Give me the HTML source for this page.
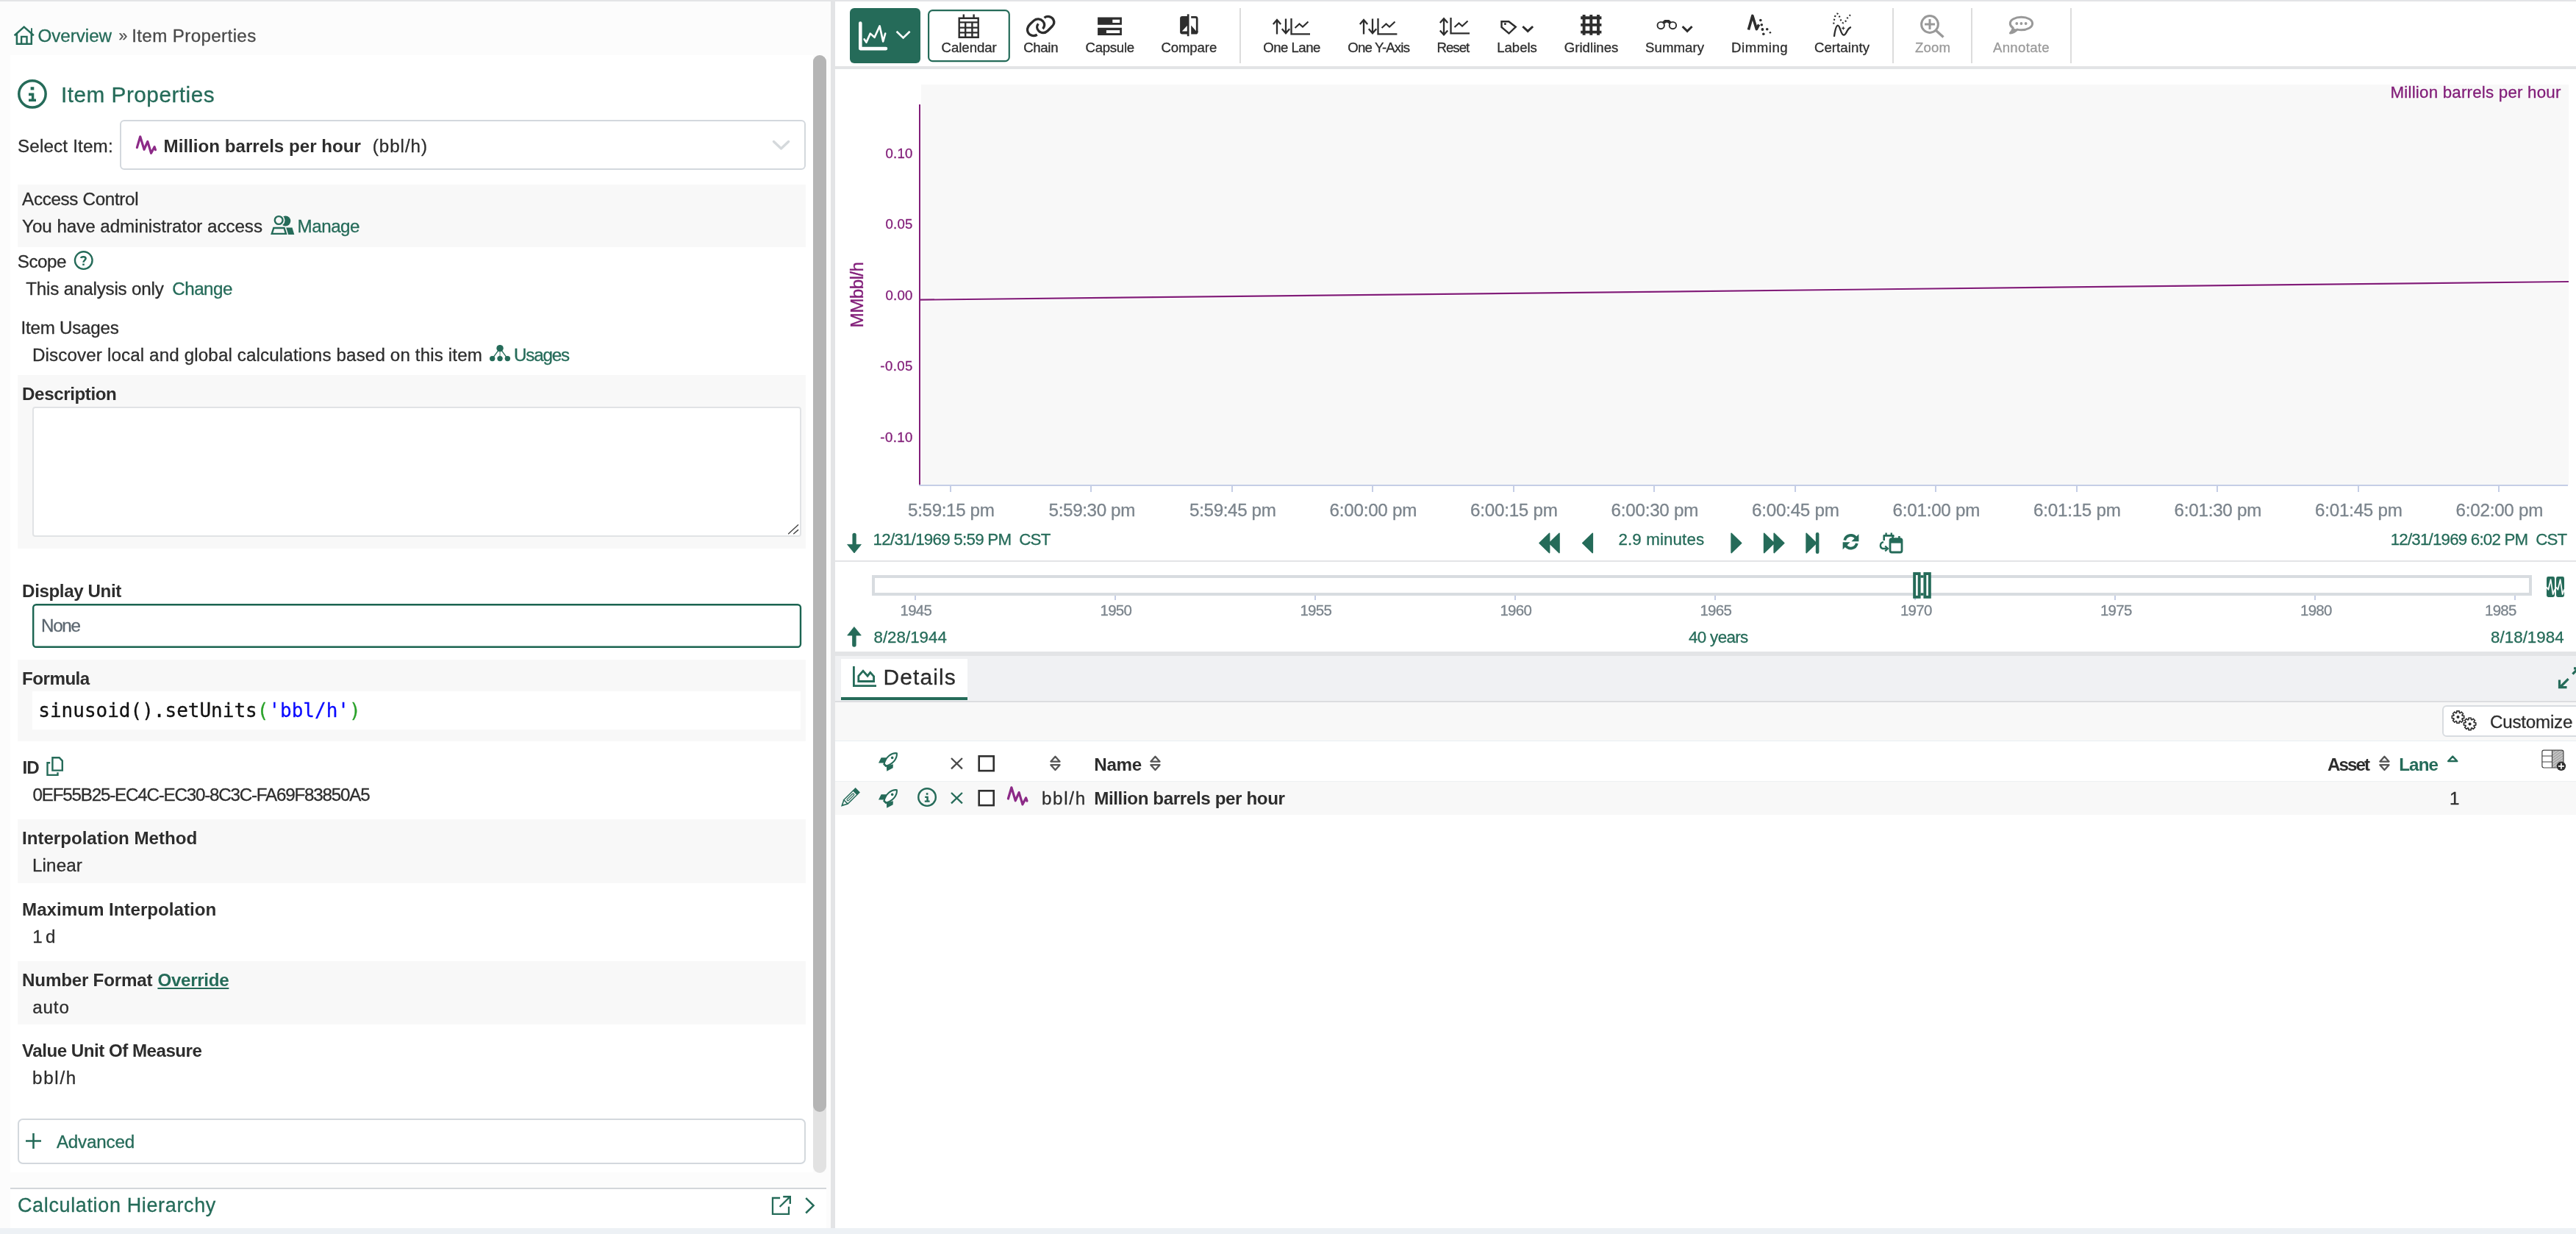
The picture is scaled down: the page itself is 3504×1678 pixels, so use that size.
<!DOCTYPE html>
<html lang="en"><head><meta charset="utf-8"><title>Item Properties</title>
<style>
html,body{margin:0;padding:0;background:#fff}
body{width:3504px;height:1678px;overflow:hidden}
#app{width:3504px;height:1678px;position:relative;overflow:hidden;background:#fff;
font-family:"Liberation Sans",sans-serif;will-change:transform}
#app>div,#app>svg,#app>span{position:absolute;box-sizing:border-box}
.t{white-space:nowrap;line-height:1.117;display:block;-webkit-text-stroke:0.3px currentColor}
.m{font-family:"DejaVu Sans Mono","Liberation Mono",monospace;line-height:1.164}
svg{overflow:visible}
</style></head>
<body>
<div id="app">
<div style="left:0px;top:0px;width:3504px;height:2px;background:#e3e4e6"></div>
<div style="left:0px;top:2px;width:1130px;height:1668px;background:#fcfcfc"></div>
<div style="left:1130px;top:2px;width:6px;height:1668px;background:#e3e4e6"></div>
<div style="left:0px;top:1669.5px;width:3504px;height:8.5px;background:#edf1f5"></div>
<div style="left:14px;top:75px;width:1092px;height:1519px;background:#fff"></div>
<div style="left:14px;top:1617px;width:1110px;height:52.5px;background:#fff"></div>
<div style="left:14px;top:1615px;width:1110px;height:2px;background:#d3d7da"></div>
<div style="left:1106px;top:75px;width:18px;height:1520px;background:#e2e2e2;border-radius:9px"></div>
<div style="left:1106px;top:75px;width:18px;height:1437px;background:#b5b5b5;border-radius:9px"></div>
<span id="t0" class="t" style="left:51.40px;top:35.4px;font-size:24.18px;color:#256b59;font-weight:400;letter-spacing:-0.011px;">Overview</span>
<span id="t1" class="t" style="left:161.60px;top:37.9px;font-size:21.39px;color:#555;font-weight:400;letter-spacing:0.000px;">»</span>
<span id="t2" class="t" style="left:179.20px;top:35.4px;font-size:24.18px;color:#4a4a4a;font-weight:400;letter-spacing:0.371px;">Item Properties</span>
<span id="t3" class="t" style="left:83.00px;top:111.9px;font-size:29.76px;color:#256b59;font-weight:400;letter-spacing:0.490px;">Item Properties</span>
<span id="t4" class="t" style="left:24.00px;top:184.5px;font-size:24.18px;color:#2d2d2d;font-weight:400;letter-spacing:0.181px;">Select Item:</span>
<div style="left:163.3px;top:163px;width:932.7px;height:68px;border:2px solid #d3d8dd;border-radius:6px;background:#fff"></div>
<span id="t5" class="t" style="left:222.60px;top:184.5px;font-size:24.18px;color:#2d2d2d;font-weight:700;letter-spacing:-0.013px;-webkit-text-stroke:0;">Million barrels per hour</span>
<span id="t6" class="t" style="left:506.80px;top:184.5px;font-size:24.18px;color:#2d2d2d;font-weight:400;letter-spacing:0.956px;">(bbl/h)</span>
<div style="left:24px;top:251px;width:1072px;height:84.5px;background:#f8f8f8"></div>
<span id="t7" class="t" style="left:30.10px;top:257.0px;font-size:24.18px;color:#2d2d2d;font-weight:400;letter-spacing:-0.314px;">Access Control</span>
<span id="t8" class="t" style="left:30.10px;top:294.2px;font-size:24.18px;color:#2d2d2d;font-weight:400;letter-spacing:-0.050px;">You have administrator access</span>
<span id="t9" class="t" style="left:404.50px;top:294.2px;font-size:24.18px;color:#256b59;font-weight:400;letter-spacing:-0.462px;">Manage</span>
<span id="t10" class="t" style="left:23.80px;top:342.1px;font-size:24.18px;color:#2d2d2d;font-weight:400;letter-spacing:-0.474px;">Scope</span>
<span id="t11" class="t" style="left:35.30px;top:379.1px;font-size:24.18px;color:#2d2d2d;font-weight:400;letter-spacing:-0.193px;">This analysis only</span>
<span id="t12" class="t" style="left:234.30px;top:379.1px;font-size:24.18px;color:#256b59;font-weight:400;letter-spacing:-0.506px;">Change</span>
<span id="t13" class="t" style="left:28.60px;top:432.1px;font-size:24.18px;color:#2d2d2d;font-weight:400;letter-spacing:-0.250px;">Item Usages</span>
<span id="t14" class="t" style="left:44.00px;top:468.5px;font-size:24.18px;color:#2d2d2d;font-weight:400;letter-spacing:0.129px;">Discover local and global calculations based on this item</span>
<span id="t15" class="t" style="left:699.10px;top:468.7px;font-size:24.18px;color:#256b59;font-weight:400;letter-spacing:-1.194px;">Usages</span>
<div style="left:24px;top:510px;width:1072px;height:235.5px;background:#f8f8f8"></div>
<span id="t16" class="t" style="left:30.10px;top:521.9px;font-size:24.18px;color:#2d2d2d;font-weight:700;letter-spacing:-0.430px;-webkit-text-stroke:0;">Description</span>
<div style="left:44px;top:553px;width:1046px;height:177px;border:2px solid #e1e3e5;border-radius:4px;background:#fff"></div>
<span id="t17" class="t" style="left:30.10px;top:789.7px;font-size:24.18px;color:#2d2d2d;font-weight:700;letter-spacing:-0.403px;-webkit-text-stroke:0;">Display Unit</span>
<svg style="left:44px;top:820.9px" width="1046.2" height="60" viewBox="0 0 1046.2 60"><rect x="1.2" y="1.2" width="1043.8" height="57.6" rx="4" fill="#fff" stroke="#1b6451" stroke-width="2.4"/></svg>
<span id="t18" class="t" style="left:56.10px;top:837.1px;font-size:24.18px;color:#5c6770;font-weight:400;letter-spacing:-1.348px;">None</span>
<div style="left:24px;top:897px;width:1072px;height:110.8px;background:#f8f8f8"></div>
<span id="t19" class="t" style="left:30.10px;top:908.8px;font-size:24.18px;color:#2d2d2d;font-weight:700;letter-spacing:-0.535px;-webkit-text-stroke:0;">Formula</span>
<div style="left:44px;top:940px;width:1045px;height:52px;background:#fff"></div>
<span id="t20" class="t m" style="left:52.30px;top:951.2px;font-size:26.0px;color:#111;font-weight:400;letter-spacing:0.000px;">sinusoid().setUnits<span style="color:#2aa22a">(</span><span style="color:#0a0aff">'bbl/h'</span><span style="color:#2aa22a">)</span></span>
<span id="t21" class="t" style="left:30.60px;top:1029.8px;font-size:24.18px;color:#2d2d2d;font-weight:700;letter-spacing:-1.016px;-webkit-text-stroke:0;">ID</span>
<span id="t22" class="t" style="left:44.50px;top:1067.3px;font-size:24.18px;color:#2d2d2d;font-weight:400;letter-spacing:-1.200px;">0EF55B25-EC4C-EC30-8C3C-FA69F83850A5</span>
<div style="left:24px;top:1114px;width:1072px;height:86.5px;background:#f8f8f8"></div>
<span id="t23" class="t" style="left:30.10px;top:1125.6px;font-size:24.18px;color:#2d2d2d;font-weight:700;letter-spacing:-0.049px;-webkit-text-stroke:0;">Interpolation Method</span>
<span id="t24" class="t" style="left:44.00px;top:1162.6px;font-size:24.18px;color:#2d2d2d;font-weight:400;letter-spacing:0.131px;">Linear</span>
<span id="t25" class="t" style="left:30.10px;top:1222.9px;font-size:24.18px;color:#2d2d2d;font-weight:700;letter-spacing:-0.025px;-webkit-text-stroke:0;">Maximum Interpolation</span>
<span id="t26" class="t" style="left:44.20px;top:1259.7px;font-size:24.18px;color:#2d2d2d;font-weight:400;letter-spacing:0.000px;word-spacing:-2.4px">1 d</span>
<div style="left:24px;top:1306.8px;width:1072px;height:86.2px;background:#f8f8f8"></div>
<span id="t27" class="t" style="left:30.10px;top:1318.9px;font-size:24.18px;color:#2d2d2d;font-weight:700;letter-spacing:-0.218px;-webkit-text-stroke:0;">Number Format</span>
<span id="t28" class="t" style="left:214.40px;top:1318.9px;font-size:24.18px;color:#256b59;font-weight:700;letter-spacing:-0.312px;-webkit-text-stroke:0;text-decoration:underline;text-decoration-thickness:1.7px;text-underline-offset:2.2px">Override</span>
<span id="t29" class="t" style="left:44.20px;top:1356.3px;font-size:24.18px;color:#2d2d2d;font-weight:400;letter-spacing:0.866px;">auto</span>
<span id="t30" class="t" style="left:30.00px;top:1415.0px;font-size:24.18px;color:#2d2d2d;font-weight:700;letter-spacing:-0.514px;-webkit-text-stroke:0;">Value Unit Of Measure</span>
<span id="t31" class="t" style="left:44.00px;top:1451.7px;font-size:24.18px;color:#2d2d2d;font-weight:400;letter-spacing:1.707px;">bbl/h</span>
<div style="left:24px;top:1521px;width:1072px;height:61.6px;border:2px solid #d3d8dd;border-radius:7px;background:#fff"></div>
<span id="t32" class="t" style="left:76.90px;top:1539.1px;font-size:24.18px;color:#256b59;font-weight:400;letter-spacing:-0.181px;">Advanced</span>
<span id="t33" class="t" style="left:24.00px;top:1624.4px;font-size:26.97px;color:#256b59;font-weight:400;letter-spacing:0.649px;">Calculation Hierarchy</span>
<div style="left:1136px;top:90px;width:2368px;height:4px;background:#e3e4e6"></div>
<div style="left:1156px;top:10.8px;width:96.2px;height:75.1px;background:#256b59;border-radius:6px"></div>
<svg style="left:1262px;top:12.9px" width="111.9" height="71.3" viewBox="0 0 111.9 71.3"><rect x="1.1" y="1.1" width="109.7" height="69.1" rx="5.5" fill="#fff" stroke="#256b59" stroke-width="2.2"/></svg>
<span id="t34" class="t" style="left:1280.50px;top:55.1px;font-size:18.6px;color:#2d2d2d;font-weight:400;letter-spacing:-0.023px;">Calendar</span>
<span id="t35" class="t" style="left:1392.20px;top:55.1px;font-size:18.6px;color:#2d2d2d;font-weight:400;letter-spacing:-0.310px;">Chain</span>
<span id="t36" class="t" style="left:1476.50px;top:55.1px;font-size:18.6px;color:#2d2d2d;font-weight:400;letter-spacing:-0.263px;">Capsule</span>
<span id="t37" class="t" style="left:1579.40px;top:55.1px;font-size:18.6px;color:#2d2d2d;font-weight:400;letter-spacing:-0.105px;">Compare</span>
<span id="t38" class="t" style="left:1718.30px;top:55.1px;font-size:18.6px;color:#2d2d2d;font-weight:400;letter-spacing:-0.519px;">One Lane</span>
<span id="t39" class="t" style="left:1833.30px;top:55.1px;font-size:18.6px;color:#2d2d2d;font-weight:400;letter-spacing:-0.814px;">One Y-Axis</span>
<span id="t40" class="t" style="left:1954.40px;top:55.1px;font-size:18.6px;color:#2d2d2d;font-weight:400;letter-spacing:-0.927px;">Reset</span>
<span id="t41" class="t" style="left:2036.30px;top:55.1px;font-size:18.6px;color:#2d2d2d;font-weight:400;letter-spacing:-0.059px;">Labels</span>
<span id="t42" class="t" style="left:2127.70px;top:55.1px;font-size:18.6px;color:#2d2d2d;font-weight:400;letter-spacing:0.041px;">Gridlines</span>
<span id="t43" class="t" style="left:2238.00px;top:55.1px;font-size:18.6px;color:#2d2d2d;font-weight:400;letter-spacing:0.074px;">Summary</span>
<span id="t44" class="t" style="left:2355.00px;top:55.1px;font-size:18.6px;color:#2d2d2d;font-weight:400;letter-spacing:0.549px;">Dimming</span>
<span id="t45" class="t" style="left:2467.90px;top:55.1px;font-size:18.6px;color:#2d2d2d;font-weight:400;letter-spacing:0.087px;">Certainty</span>
<span id="t46" class="t" style="left:2605.10px;top:55.1px;font-size:18.6px;color:#9a9a9a;font-weight:400;letter-spacing:0.120px;">Zoom</span>
<span id="t47" class="t" style="left:2711.00px;top:55.1px;font-size:18.6px;color:#9a9a9a;font-weight:400;letter-spacing:0.315px;">Annotate</span>
<div style="left:1686px;top:11px;width:2px;height:75px;background:#dcdcdc"></div>
<div style="left:2574px;top:11px;width:2px;height:75px;background:#dcdcdc"></div>
<div style="left:2681px;top:11px;width:2px;height:75px;background:#dcdcdc"></div>
<div style="left:2816px;top:11px;width:2px;height:75px;background:#dcdcdc"></div>
<div style="left:1252.6px;top:115px;width:2241px;height:545px;background:#f8f8f8"></div>
<div style="left:1250px;top:142px;width:2px;height:518px;background:#821e79"></div>
<div style="left:1250px;top:659px;width:2243px;height:2px;background:#c5cee6"></div>
<div style="left:1292px;top:660px;width:2px;height:9px;background:#c5cee6"></div>
<span id="t48" class="t" style="left:1235.10px;top:680.0px;font-size:24.18px;color:#7b848c;font-weight:400;letter-spacing:-0.356px;">5:59:15 pm</span>
<div style="left:1483px;top:660px;width:2px;height:9px;background:#c5cee6"></div>
<span id="t49" class="t" style="left:1426.60px;top:680.0px;font-size:24.18px;color:#7b848c;font-weight:400;letter-spacing:-0.356px;">5:59:30 pm</span>
<div style="left:1675px;top:660px;width:2px;height:9px;background:#c5cee6"></div>
<span id="t50" class="t" style="left:1618.10px;top:680.0px;font-size:24.18px;color:#7b848c;font-weight:400;letter-spacing:-0.356px;">5:59:45 pm</span>
<div style="left:1866px;top:660px;width:2px;height:9px;background:#c5cee6"></div>
<span id="t51" class="t" style="left:1808.60px;top:680.0px;font-size:24.18px;color:#7b848c;font-weight:400;letter-spacing:-0.245px;">6:00:00 pm</span>
<div style="left:2058px;top:660px;width:2px;height:9px;background:#c5cee6"></div>
<span id="t52" class="t" style="left:2000.10px;top:680.0px;font-size:24.18px;color:#7b848c;font-weight:400;letter-spacing:-0.245px;">6:00:15 pm</span>
<div style="left:2249px;top:660px;width:2px;height:9px;background:#c5cee6"></div>
<span id="t53" class="t" style="left:2191.60px;top:680.0px;font-size:24.18px;color:#7b848c;font-weight:400;letter-spacing:-0.245px;">6:00:30 pm</span>
<div style="left:2441px;top:660px;width:2px;height:9px;background:#c5cee6"></div>
<span id="t54" class="t" style="left:2383.10px;top:680.0px;font-size:24.18px;color:#7b848c;font-weight:400;letter-spacing:-0.245px;">6:00:45 pm</span>
<div style="left:2632px;top:660px;width:2px;height:9px;background:#c5cee6"></div>
<span id="t55" class="t" style="left:2574.60px;top:680.0px;font-size:24.18px;color:#7b848c;font-weight:400;letter-spacing:-0.245px;">6:01:00 pm</span>
<div style="left:2824px;top:660px;width:2px;height:9px;background:#c5cee6"></div>
<span id="t56" class="t" style="left:2766.10px;top:680.0px;font-size:24.18px;color:#7b848c;font-weight:400;letter-spacing:-0.245px;">6:01:15 pm</span>
<div style="left:3015px;top:660px;width:2px;height:9px;background:#c5cee6"></div>
<span id="t57" class="t" style="left:2957.60px;top:680.0px;font-size:24.18px;color:#7b848c;font-weight:400;letter-spacing:-0.245px;">6:01:30 pm</span>
<div style="left:3207px;top:660px;width:2px;height:9px;background:#c5cee6"></div>
<span id="t58" class="t" style="left:3149.10px;top:680.0px;font-size:24.18px;color:#7b848c;font-weight:400;letter-spacing:-0.245px;">6:01:45 pm</span>
<div style="left:3398px;top:660px;width:2px;height:9px;background:#c5cee6"></div>
<span id="t59" class="t" style="left:3340.60px;top:680.0px;font-size:24.18px;color:#7b848c;font-weight:400;letter-spacing:-0.245px;">6:02:00 pm</span>
<span id="t60" class="t" style="left:1204.40px;top:198.6px;font-size:18.6px;color:#821e79;font-weight:400;letter-spacing:0.251px;">0.10</span>
<span id="t61" class="t" style="left:1204.40px;top:295.1px;font-size:18.6px;color:#821e79;font-weight:400;letter-spacing:0.251px;">0.05</span>
<span id="t62" class="t" style="left:1204.40px;top:391.6px;font-size:18.6px;color:#821e79;font-weight:400;letter-spacing:0.251px;">0.00</span>
<span id="t63" class="t" style="left:1197.30px;top:488.1px;font-size:18.6px;color:#821e79;font-weight:400;letter-spacing:0.415px;">-0.05</span>
<span id="t64" class="t" style="left:1197.30px;top:584.6px;font-size:18.6px;color:#821e79;font-weight:400;letter-spacing:0.415px;">-0.10</span>
<svg style="left:1250px;top:370px;" width="2244" height="50" viewBox="0 0 2244 50"><path d="M2.4,37.7 L2244,13" stroke="#fff" stroke-width="4.6" fill="none"/><path d="M1,37.7 L2244,13" stroke="#821e79" stroke-width="2.2" fill="none"/></svg>
<span id="t65" class="t" style="left:3251.50px;top:113.5px;font-size:22.32px;color:#821e79;font-weight:400;letter-spacing:0.217px;">Million barrels per hour</span>
<span class="t" style="left:1165.6px;top:400.6px;font-size:24.2px;color:#821e79;transform:translate(-50%,-50%) rotate(-90deg);letter-spacing:-0.55px">MMbbl/h</span>
<span id="t66" class="t" style="left:1187.60px;top:722.0px;font-size:22.32px;color:#256b59;font-weight:400;letter-spacing:-0.739px;">12/31/1969 5:59 PM&nbsp; CST</span>
<span id="t67" class="t" style="left:2201.40px;top:722.0px;font-size:22.32px;color:#256b59;font-weight:400;letter-spacing:0.141px;">2.9 minutes</span>
<span id="t68" class="t" style="left:3251.70px;top:722.0px;font-size:22.32px;color:#256b59;font-weight:400;letter-spacing:-0.794px;">12/31/1969 6:02 PM&nbsp; CST</span>
<div style="left:1136px;top:762px;width:2368px;height:2px;background:#e3e4e6"></div>
<div style="left:1186px;top:782px;width:2258px;height:28px;border:4px solid #d8dce0;background:#fff"></div>
<div style="left:1244px;top:810px;width:2px;height:6px;background:#c5cee6"></div>
<span id="t69" class="t" style="left:1224.50px;top:819.4px;font-size:20.46px;color:#7b848c;font-weight:400;letter-spacing:-0.700px;">1945</span>
<div style="left:1516px;top:810px;width:2px;height:6px;background:#c5cee6"></div>
<span id="t70" class="t" style="left:1496.50px;top:819.4px;font-size:20.46px;color:#7b848c;font-weight:400;letter-spacing:-0.700px;">1950</span>
<div style="left:1788px;top:810px;width:2px;height:6px;background:#c5cee6"></div>
<span id="t71" class="t" style="left:1768.40px;top:819.4px;font-size:20.46px;color:#7b848c;font-weight:400;letter-spacing:-0.700px;">1955</span>
<div style="left:2060px;top:810px;width:2px;height:6px;background:#c5cee6"></div>
<span id="t72" class="t" style="left:2040.40px;top:819.4px;font-size:20.46px;color:#7b848c;font-weight:400;letter-spacing:-0.700px;">1960</span>
<div style="left:2332px;top:810px;width:2px;height:6px;background:#c5cee6"></div>
<span id="t73" class="t" style="left:2312.40px;top:819.4px;font-size:20.46px;color:#7b848c;font-weight:400;letter-spacing:-0.700px;">1965</span>
<div style="left:2604px;top:810px;width:2px;height:6px;background:#c5cee6"></div>
<span id="t74" class="t" style="left:2584.90px;top:819.4px;font-size:20.46px;color:#7b848c;font-weight:400;letter-spacing:-0.700px;">1970</span>
<div style="left:2876px;top:810px;width:2px;height:6px;background:#c5cee6"></div>
<span id="t75" class="t" style="left:2856.90px;top:819.4px;font-size:20.46px;color:#7b848c;font-weight:400;letter-spacing:-0.700px;">1975</span>
<div style="left:3148px;top:810px;width:2px;height:6px;background:#c5cee6"></div>
<span id="t76" class="t" style="left:3129.00px;top:819.4px;font-size:20.46px;color:#7b848c;font-weight:400;letter-spacing:-0.700px;">1980</span>
<div style="left:3420px;top:810px;width:2px;height:6px;background:#c5cee6"></div>
<span id="t77" class="t" style="left:3380.00px;top:819.4px;font-size:20.46px;color:#7b848c;font-weight:400;letter-spacing:-0.700px;">1985</span>
<span id="t78" class="t" style="left:1188.50px;top:854.7px;font-size:22.32px;color:#256b59;font-weight:400;letter-spacing:0.006px;">8/28/1944</span>
<span id="t79" class="t" style="left:2297.00px;top:854.7px;font-size:22.32px;color:#256b59;font-weight:400;letter-spacing:-0.632px;">40 years</span>
<span id="t80" class="t" style="left:3388.10px;top:854.7px;font-size:22.32px;color:#256b59;font-weight:400;letter-spacing:0.031px;">8/18/1984</span>
<div style="left:1136px;top:886.4px;width:2368px;height:6px;background:#e3e4e6"></div>
<div style="left:1136px;top:892.4px;width:2368px;height:60.5px;background:#f0f1f3"></div>
<div style="left:1136px;top:952.7px;width:2368px;height:2px;background:#dcdde0"></div>
<div style="left:1144px;top:896.3px;width:172px;height:55.5px;background:#fff;border-bottom:4px solid #256b59"></div>
<span id="t81" class="t" style="left:1201.50px;top:904.2px;font-size:30px;color:#2a2a2a;font-weight:400;letter-spacing:1.100px;">Details</span>
<div style="left:1136px;top:954.5px;width:2368px;height:53px;background:#f8f8f8;border-bottom:1.4px solid #e9eef3"></div>
<div style="left:3322.4px;top:958.5px;width:200px;height:43.3px;border:2px solid #d8dce0;border-radius:6px;background:#fff"></div>
<span id="t82" class="t" style="left:3387.00px;top:968.1px;font-size:24.18px;color:#2d2d2d;font-weight:400;letter-spacing:-0.229px;">Customize</span>
<div style="left:1136px;top:1061.5px;width:2368px;height:46px;background:#f8f8f8;border-top:1.5px solid #eef0f2"></div>
<span id="t83" class="t" style="left:1488.20px;top:1025.9px;font-size:24.18px;color:#2d2d2d;font-weight:700;letter-spacing:-0.264px;-webkit-text-stroke:0;">Name</span>
<span id="t84" class="t" style="left:3166.10px;top:1025.9px;font-size:24.18px;color:#2d2d2d;font-weight:700;letter-spacing:-1.971px;-webkit-text-stroke:0;">Asset</span>
<span id="t85" class="t" style="left:3263.20px;top:1025.9px;font-size:24.18px;color:#256b59;font-weight:700;letter-spacing:-0.858px;-webkit-text-stroke:0;">Lane</span>
<span id="t86" class="t" style="left:1416.90px;top:1072.0px;font-size:24.18px;color:#2d2d2d;font-weight:400;letter-spacing:1.732px;">bbl/h</span>
<span id="t87" class="t" style="left:1488.20px;top:1072.0px;font-size:24.18px;color:#2d2d2d;font-weight:700;letter-spacing:-0.383px;-webkit-text-stroke:0;">Million barrels per hour</span>
<span id="t88" class="t" style="left:3332.00px;top:1072.0px;font-size:24.18px;color:#2d2d2d;font-weight:400;letter-spacing:0.000px;">1</span>
<svg style="left:16px;top:32px" width="34" height="32" viewBox="16 32 34 32"><path d="M19.6,48.2 L32.7,36.6 L45.9,48.2" fill="none" stroke="#256b59" stroke-width="2.5"/><path d="M22.9,45.8 V59.8 H42.8 V45.8" fill="none" stroke="#256b59" stroke-width="2.5"/><path d="M29.1,59.8 V49.9 H36.5 V59.8" fill="none" stroke="#256b59" stroke-width="2.4"/><path d="M43,38.2 V46" fill="none" stroke="#256b59" stroke-width="1.9"/></svg>
<svg style="left:20px;top:104px" width="48" height="48" viewBox="20 104 48 48"><circle cx="43.95" cy="127.85" r="18.2" fill="none" stroke="#256b59" stroke-width="3.5"/><rect x="41.6" y="118.2" width="4.7" height="4.2" fill="#256b59"/><path d="M39,126.6 H46.3 V134.5 H49 V137.9 H39 V134.5 H42.9 V130.3 H39 Z" fill="#256b59"/></svg>
<svg style="left:184.7px;top:183.5px" width="27.7" height="26.1" viewBox="0 0 28 26" preserveAspectRatio="none"><path d="M1.4,16.6 L5.8,1.8 L11.2,19.2 L16,8.4 L20.8,24.2 L25.4,15.6 L26.8,19.6" fill="none" stroke="#8c2a87" stroke-width="3.2" stroke-linejoin="round" stroke-linecap="round"/></svg>
<svg style="left:1050.7px;top:191.3px" width="23.1" height="13.5" viewBox="0 0 23 13.5" preserveAspectRatio="none"><path d="M1.5,1.5 L11.5,11 L21.5,1.5" fill="none" stroke="#d5d9dc" stroke-width="3.4" stroke-linecap="round" stroke-linejoin="round"/></svg>
<svg style="left:364px;top:290px" width="40" height="32" viewBox="364 290 40 32"><defs><clipPath id="mh"><path d="M364,290 H404 V322 H364 Z M379.2,291.2 A8.3,8.3 0 1 0 379.2,307.8 A8.3,8.3 0 1 0 379.2,291.2 Z" clip-rule="evenodd"/></clipPath></defs><circle cx="388.4" cy="300.5" r="6.9" fill="#256b59" clip-path="url(#mh)"/><circle cx="379.2" cy="299.5" r="5.4" fill="none" stroke="#256b59" stroke-width="2.4"/><path d="M372.3,310 H386.5 L389,317.9 H369.8 Z" fill="none" stroke="#256b59" stroke-width="2.4"/><path d="M389.2,309.6 H397.5 L400.3,319.1 H392.2 Z" fill="#256b59"/></svg>
<svg style="left:98px;top:338px" width="32" height="32" viewBox="98 338 32 32"><circle cx="113.75" cy="354.1" r="11.8" fill="none" stroke="#256b59" stroke-width="2.4"/><path d="M110.2,351 C110.6,348.6 116.6,348.6 116.6,351.6 C116.6,353.8 113.5,354 113.5,356.8" fill="none" stroke="#256b59" stroke-width="2.5"/><rect x="112.2" y="358.5" width="2.6" height="2.4" fill="#256b59"/></svg>
<svg style="left:662px;top:466px" width="36" height="28" viewBox="662 466 36 28"><path d="M680.06,473.6 L669.7,487.6 M680.06,473.6 L690.4,487.6" fill="none" stroke="#256b59" stroke-width="1.4"/><path d="M680.06,473.6 V487.6" fill="none" stroke="#256b59" stroke-width="1.2" opacity="0.7"/><circle cx="680.06" cy="473.6" r="4.7" fill="#256b59"/><circle cx="669.7" cy="487.6" r="3.7" fill="#256b59"/><circle cx="680.06" cy="487.6" r="3.7" fill="#256b59"/><circle cx="690.4" cy="487.6" r="3.7" fill="#256b59"/></svg>
<svg style="left:1068px;top:710px" width="22" height="20" viewBox="1068 710 22 20"><path d="M1072.6,725.8 L1085.6,713.8 M1079.7,725.8 L1085.6,720.6" fill="none" stroke="#444" stroke-width="1.4" stroke-linecap="round"/></svg>
<svg style="left:60px;top:1026px" width="30" height="32" viewBox="60 1026 30 32"><path d="M71.4,1030.2 H80.6 L84.8,1034.6 V1047.6 H71.4 Z" fill="none" stroke="#256b59" stroke-width="2.4"/><path d="M68.2,1037.2 H64.5 V1053.9 H78.5 V1050.2" fill="none" stroke="#256b59" stroke-width="2.4"/></svg>
<svg style="left:35px;top:1541px" width="21" height="21" viewBox="0 0 21 21" preserveAspectRatio="none"><path d="M10.5,0 V21 M0,10.5 H21" fill="none" stroke="#256b59" stroke-width="2.6"/></svg>
<svg style="left:1046px;top:1622px" width="66" height="34" viewBox="1046 1622 66 34"><path d="M1061.1,1629 H1051 V1650.9 H1073 V1640.8" fill="none" stroke="#256b59" stroke-width="2.3"/><path d="M1060.6,1641 L1074.4,1627.5 M1065.2,1627.2 H1074.8 V1637" fill="none" stroke="#256b59" stroke-width="2.4"/><path d="M1096.2,1629.2 L1106.6,1639.3 L1096.2,1649.5" fill="none" stroke="#256b59" stroke-width="2.5"/></svg>
<svg style="left:1160px;top:20px" width="90" height="60" viewBox="1160 20 90 60"><path d="M1170.3,31.5 V66.1 H1205" fill="none" stroke="#fff" stroke-width="4.6" stroke-linecap="round" stroke-linejoin="round"/><path d="M1175.6,53.3 L1178.4,57.6 L1183.8,45.6 L1189.6,50.8 L1196.6,35.4 L1201.2,56.4 L1204.2,45.6" fill="none" stroke="#fff" stroke-width="2.6" stroke-linejoin="round" stroke-linecap="round"/><path d="M1219.6,42.8 L1228.6,51.4 L1237.6,42.8" fill="none" stroke="#fff" stroke-width="2.6"/></svg>
<svg style="left:1300px;top:17px" width="36" height="38" viewBox="1300 17 36 38"><path d="M1304.7,24.8 H1330.7 V50.7 H1304.7 Z M1304.7,30.4 H1330.7 M1304.7,37.6 H1330.7 M1304.7,44.4 H1330.7 M1313.2,30.4 V50.7 M1322.4,30.4 V50.7 M1310.8,19.6 V24.8 M1324.6,19.6 V24.8" fill="none" stroke="#2d2d2d" stroke-width="2.4"/></svg>
<svg style="left:1392px;top:17px" width="48" height="38" viewBox="1392 17 48 38"><path d="M1410.8,47.3 C1405,50.5 1398.5,47.5 1397.6,41.5 C1397,37.5 1399,35 1401.5,32.5 L1406.5,27.9 C1410,24.8 1415.5,25.3 1418.6,28.8 C1421.3,32 1421,36 1418.5,39.2" fill="none" stroke="#2d2d2d" stroke-width="3.3"/><path d="M1420.5,24.2 C1424.5,21 1430.5,22.3 1432.8,26.6 C1434.6,30 1433.5,33.5 1431,36 L1425,42 C1421.5,45.5 1416,45.5 1412.8,42 C1410,39 1410,35 1412.4,32.3" fill="none" stroke="#2d2d2d" stroke-width="3.3"/></svg>
<svg style="left:1490px;top:20px" width="40" height="32" viewBox="1490 20 40 32"><path d="M1493.1,23.6 H1525.9 V33.7 H1493.1 Z M1493.1,37.8 H1525.9 V48 H1493.1 Z" fill="#2d2d2d"/><rect x="1513.3" y="26.7" width="9.9" height="4.3" fill="#fff"/><rect x="1504.9" y="41.1" width="18.3" height="4" fill="#fff"/></svg>
<svg style="left:1600px;top:16px" width="34" height="36" viewBox="1600 16 34 36"><path d="M1615.2,22 H1608.1 Q1605.1,22 1605.1,25 V43.5 Q1605.1,46.5 1608.1,46.5 H1615.2 Z" fill="#2d2d2d"/><path d="M1607.8,42.6 L1615.2,34.5 V42.6 Z" fill="#fff"/><path d="M1616.15,19.3 V49.2" fill="none" stroke="#2d2d2d" stroke-width="2.7"/><path d="M1620.2,23.4 H1626.2 Q1628.2,23.4 1628.2,25.4 V44" fill="none" stroke="#2d2d2d" stroke-width="2.7"/><path d="M1620.2,34.5 L1627,42.2 L1629.5,42.2 V43.7 Q1629.5,46.5 1626.7,46.5 H1620.2 Z" fill="#2d2d2d"/></svg>
<svg style="left:1730.8px;top:25.2px" width="51.0" height="22.5" viewBox="0 0 51.0 22.5" preserveAspectRatio="none"><path d="M6,21.5 V2 M0.8,8 L6,2 L11.2,8" fill="none" stroke="#2d2d2d" stroke-width="2.3"/><path d="M18,0.5 V20 M12.8,14.2 L18,20.2 L23.2,14.2" fill="none" stroke="#2d2d2d" stroke-width="2.3"/><path d="M25.5,0 V21.3 H51.0" fill="none" stroke="#2d2d2d" stroke-width="2.3"/><path d="M30.5,13 L36.5,7.5 L41.0,11.5 L48.5,4.5" fill="none" stroke="#2d2d2d" stroke-width="2.1"/></svg>
<svg style="left:1848.6px;top:25.2px" width="51.4" height="22.5" viewBox="0 0 51.4 22.5" preserveAspectRatio="none"><path d="M6,21.5 V2 M0.8,8 L6,2 L11.2,8" fill="none" stroke="#2d2d2d" stroke-width="2.3"/><path d="M18,0.5 V20 M12.8,14.2 L18,20.2 L23.2,14.2" fill="none" stroke="#2d2d2d" stroke-width="2.3"/><path d="M25.5,0 V21.3 H51.40000000000009" fill="none" stroke="#2d2d2d" stroke-width="2.3"/><path d="M30.5,13 L36.5,7.5 L41.0,11.5 L48.5,4.5" fill="none" stroke="#2d2d2d" stroke-width="2.1"/></svg>
<svg style="left:1957.6px;top:23.6px" width="41.0" height="25.0" viewBox="0 0 41.0 25" preserveAspectRatio="none"><path d="M6,1.5 V23 M0.8,7 L6,1.2 L11.2,7 M0.8,17.5 L6,23.3 L11.2,17.5" fill="none" stroke="#2d2d2d" stroke-width="2.3"/><path d="M15.5,0 V21.3 H41.0" fill="none" stroke="#2d2d2d" stroke-width="2.3"/><path d="M20.5,13 L26.5,7.5 L31.0,11.5 L38.5,4.5" fill="none" stroke="#2d2d2d" stroke-width="2.1"/></svg>
<svg style="left:2036px;top:22px" width="56" height="30" viewBox="2036 22 56 30"><path d="M2042.5,29.2 H2052.3 L2061.8,36.7 L2052.5,45.5 L2042.5,37 Z" fill="none" stroke="#2d2d2d" stroke-width="2.4" stroke-linejoin="miter"/><circle cx="2047.4" cy="32.4" r="1.5" fill="#2d2d2d"/><path d="M2071.3,36 L2078.2,42.4 L2085.1,36" fill="none" stroke="#2d2d2d" stroke-width="3"/></svg>
<svg style="left:2146px;top:16px" width="36" height="36" viewBox="2146 16 36 36"><path d="M2150.2,24.3 H2178.4 M2150.2,33.9 H2178.4 M2150.2,43.6 H2178.4 M2154.6,19.9 V47.7 M2164.3,19.9 V47.7 M2174,19.9 V47.7" fill="none" stroke="#2d2d2d" stroke-width="3.9"/></svg>
<svg style="left:2250px;top:22px" width="58" height="26" viewBox="2250 22 58 26"><circle cx="2259.2" cy="34.6" r="4.7" fill="none" stroke="#2d2d2d" stroke-width="1.9"/><circle cx="2275.4" cy="34.6" r="4.7" fill="none" stroke="#2d2d2d" stroke-width="1.9"/><path d="M2260.5,30.2 L2264.3,27 H2270.3 L2274.1,30.2 L2271,32.4 L2267.3,30.6 L2263.6,32.4 Z" fill="#2d2d2d"/><path d="M2288.6,36 L2295.1,42.4 L2301.6,36" fill="none" stroke="#2d2d2d" stroke-width="3"/></svg>
<svg style="left:2372px;top:14px" width="42" height="38" viewBox="2372 14 42 38"><path d="M2378.4,40.6 L2383.8,21.4 L2389.4,39.6 L2392.6,33.4" fill="none" stroke="#2d2d2d" stroke-width="3.6" stroke-linejoin="round" stroke-linecap="butt"/><circle cx="2394.8" cy="27.5" r="1.8" fill="#2d2d2d"/><circle cx="2396.3" cy="33.8" r="1.8" fill="#2d2d2d"/><circle cx="2397.4" cy="40" r="1.9" fill="#2d2d2d"/><circle cx="2403.7" cy="39.7" r="1.8" fill="#2d2d2d"/><circle cx="2398.8" cy="46.3" r="1.8" fill="#2d2d2d"/><circle cx="2407.9" cy="44.2" r="1.3" fill="#2d2d2d"/></svg>
<svg style="left:2488px;top:14px" width="36" height="40" viewBox="2488 14 36 40"><path d="M2494.2,32.7 C2495,25 2496.6,18.7 2499.1,18.7 C2502.4,18.7 2503.6,31.3 2507.5,31.3 C2511,31.3 2512,22.6 2517.2,20.4" fill="none" stroke="#2d2d2d" stroke-width="2.2" stroke-dasharray="2 2.9"/><path d="M2494.9,49.8 C2496,42 2497.4,34.7 2499.9,34.7 C2503.2,34.7 2503.8,47.6 2507.9,47.6 C2512,47.6 2511.6,38.8 2517.9,36.9" fill="none" stroke="#2d2d2d" stroke-width="2.3"/><path d="M2507.3,36.2 V40.4 M2505.2,38.3 H2509.4" fill="none" stroke="#2d2d2d" stroke-width="1.2"/></svg>
<svg style="left:2612.3px;top:19.7px" width="32.5" height="31.6" viewBox="0 0 32.5 31.6" preserveAspectRatio="none"><circle cx="13" cy="13" r="11.4" fill="none" stroke="#999" stroke-width="3"/><path d="M21.5,21.5 L31.5,30.6" fill="none" stroke="#999" stroke-width="3.4"/><path d="M13,6 V20 M6,13 H20" fill="none" stroke="#999" stroke-width="3"/></svg>
<svg style="left:2732.7px;top:21.7px" width="32.9" height="24.5" viewBox="0 0 33 24.5" preserveAspectRatio="none"><path d="M16.5,1.3 C25,1.3 31.7,5 31.7,10 C31.7,15 25,18.7 16.5,18.7 C14.5,18.7 12.8,18.5 11,18.1 C8.5,20.6 5.5,22.6 1.5,23 C3.5,20.8 5,18.6 5.3,16 C2.8,14.4 1.3,12.3 1.3,10 C1.3,5 8,1.3 16.5,1.3 Z" fill="none" stroke="#999" stroke-width="3" stroke-linejoin="round"/><path d="M5.3,16.6 C5,19 3.5,21 1.5,23 C5.5,22.6 8.5,20.6 11,18.1 Z" fill="#999"/><circle cx="10.3" cy="10" r="1.9" fill="#999"/><circle cx="16.5" cy="10" r="1.9" fill="#999"/><circle cx="22.7" cy="10" r="1.9" fill="#999"/></svg>
<svg style="left:1148px;top:720px" width="28" height="36" viewBox="1148 720 28 36"><path d="M1162.1,727.3 V741" fill="none" stroke="#256b59" stroke-width="5.3" stroke-linecap="round"/><path d="M1152.6,740.4 H1171.4 L1162,752 Z" fill="#256b59" stroke="#256b59" stroke-width="0.8" stroke-linejoin="round"/></svg>
<svg style="left:1148px;top:848px" width="28" height="36" viewBox="1148 848 28 36"><path d="M1161.9,877 V863.5" fill="none" stroke="#256b59" stroke-width="5.5" stroke-linecap="round"/><path d="M1152.7,864 H1171.3 L1161.9,852.5 Z" fill="#256b59" stroke="#256b59" stroke-width="0.8" stroke-linejoin="round"/></svg>
<svg style="left:2090px;top:720px" width="40" height="36" viewBox="2090 720 40 36"><path d="M2107.6,725.4 V751.6 L2094,738.5 Z M2121,725.4 V751.6 L2107.4,738.5 Z" fill="#256b59" stroke="#256b59" stroke-width="1.6" stroke-linejoin="round"/></svg>
<svg style="left:2148px;top:720px" width="24" height="36" viewBox="2148 720 24 36"><path d="M2166.3,725.4 V751.6 L2152.7,738.5 Z" fill="#256b59" stroke="#256b59" stroke-width="1.6" stroke-linejoin="round"/></svg>
<svg style="left:2350px;top:720px" width="24" height="36" viewBox="2350 720 24 36"><path d="M2355.1,725.4 V751.6 L2368.7,738.5 Z" fill="#256b59" stroke="#256b59" stroke-width="1.6" stroke-linejoin="round"/></svg>
<svg style="left:2395px;top:720px" width="40" height="36" viewBox="2395 720 40 36"><path d="M2399.6,725.4 V751.6 L2413.2,738.5 Z M2413.2,725.4 V751.6 L2426.8,738.5 Z" fill="#256b59" stroke="#256b59" stroke-width="1.6" stroke-linejoin="round"/></svg>
<svg style="left:2452px;top:720px" width="28" height="36" viewBox="2452 720 28 36"><path d="M2457.1,725.4 V751.6 L2470.7,738.5 Z" fill="#256b59" stroke="#256b59" stroke-width="1.6" stroke-linejoin="round"/><path d="M2472.1,726.2 V750.8" fill="none" stroke="#256b59" stroke-width="4.6" stroke-linecap="round"/></svg>
<svg style="left:2502px;top:720px" width="32" height="36" viewBox="2502 720 32 36"><path d="M2509.2,734.6 A8.6,8.6 0 0 1 2524.4,731.2" fill="none" stroke="#256b59" stroke-width="3.8"/><path d="M2528.4,726.2 V736.2 H2518.4 Z" fill="#256b59"/><path d="M2525.8,738.8 A8.6,8.6 0 0 1 2510.6,742.2" fill="none" stroke="#256b59" stroke-width="3.8"/><path d="M2506.6,747.2 V737.2 H2516.6 Z" fill="#256b59"/></svg>
<svg style="left:2552px;top:720px" width="40" height="36" viewBox="2552 720 40 36"><rect x="2571" y="732.6" width="16" height="18.4" rx="2.2" fill="none" stroke="#256b59" stroke-width="2.8"/><path d="M2571,732.6 H2587 V738.6 H2571 Z" fill="#256b59"/><path d="M2574.6,729 V733 M2583.4,729 V733" fill="none" stroke="#256b59" stroke-width="2.6"/><path d="M2562.7,735 V728.4 H2575.4 V730" fill="none" stroke="#256b59" stroke-width="2.6" stroke-linejoin="round"/><path d="M2565.6,724.6 V728.4 M2572.8,724.6 V728.4" fill="none" stroke="#256b59" stroke-width="2.4"/><path d="M2562,737.2 A4.6,4.6 0 0 0 2560.6,746 H2566.4" fill="none" stroke="#256b59" stroke-width="2.3"/><path d="M2564.2,742.6 L2568,746 L2564.2,749.4" fill="none" stroke="#256b59" stroke-width="2.2"/></svg>
<svg style="left:2598px;top:774px" width="34" height="44" viewBox="2598 774 34 44"><rect x="2612" y="782" width="5" height="28" fill="#fff"/><rect x="2604.15" y="780.05" width="6.5" height="31.8" fill="#fff"  stroke="#256b59" stroke-width="3.9"/><rect x="2618.35" y="780.05" width="6.5" height="31.8" fill="#fff"  stroke="#256b59" stroke-width="3.9"/><rect x="2612.4" y="782.2" width="4.2" height="3.5" fill="#256b59"/><rect x="2612.4" y="806.3" width="4.2" height="3.5" fill="#256b59"/></svg>
<div style="left:3464px;top:783.8px;width:11px;height:28.3px;background:#256b59;border-radius:2.4px"></div>
<svg style="left:3464px;top:783.8px" width="11" height="28.3" viewBox="3464 783.8 11 28.3"><path d="M3464,798.4 L3466.4,801.6 L3469.6,788 L3472.6,808 L3475,801.4" fill="none" stroke="#fff" stroke-width="1.7" stroke-linejoin="round"/></svg>
<div style="left:3476.8px;top:783.8px;width:11px;height:28.3px;background:#256b59;border-radius:2.4px"></div>
<svg style="left:3476.8px;top:783.8px" width="11" height="28.3" viewBox="3476.8 783.8 11 28.3"><path d="M3476.8,798.4 L3479.2000000000003,801.6 L3482.4,788 L3485.4,808 L3487.8,801.4" fill="none" stroke="#fff" stroke-width="1.7" stroke-linejoin="round"/></svg>
<svg style="left:1156px;top:902px" width="40" height="36" viewBox="1156 902 40 36"><path d="M1161.4,906 V932.6 H1192" fill="none" stroke="#256b59" stroke-width="2.8"/><path d="M1167.8,926.5 V919.2 L1174,912.4 L1180.1,919.2 L1183.8,914.4 L1188.6,919.7 V926.5 Z" fill="none" stroke="#256b59" stroke-width="2.8" stroke-linejoin="miter"/></svg>
<svg style="left:3474px;top:900px" width="30" height="40" viewBox="3474 900 30 40"><path d="M3493.6,923.2 L3481.8,935 M3481.5,924.6 V934.6 H3491.5" fill="none" stroke="#256b59" stroke-width="3.2"/><path d="M3499.4,916.6 L3511,905 M3501,908.8 H3511" fill="none" stroke="#256b59" stroke-width="3.2"/></svg>
<svg style="left:3330px;top:962px" width="44" height="36" viewBox="3330 962 44 36"><path d="M3351.7,973.4 L3351.7,976.8 L3349.3,976.9 L3348.9,977.9 L3350.5,979.7 L3348.1,982.1 L3346.3,980.5 L3345.3,980.9 L3345.2,983.3 L3341.8,983.3 L3341.7,980.9 L3340.7,980.5 L3338.9,982.1 L3336.5,979.7 L3338.1,977.9 L3337.7,976.9 L3335.3,976.8 L3335.3,973.4 L3337.7,973.3 L3338.1,972.3 L3336.5,970.5 L3338.9,968.1 L3340.7,969.7 L3341.7,969.3 L3341.8,966.9 L3345.2,966.9 L3345.3,969.3 L3346.3,969.7 L3348.1,968.1 L3350.5,970.5 L3348.9,972.3 L3349.3,973.3 Z" fill="none" stroke="#2d2d2d" stroke-width="1.6" stroke-linejoin="round"/><circle cx="3343.5" cy="975.1" r="2" fill="#2d2d2d"/><path d="M3367.8,982.7 L3367.8,986.1 L3365.4,986.2 L3365.0,987.2 L3366.6,989.0 L3364.2,991.4 L3362.4,989.8 L3361.4,990.2 L3361.3,992.6 L3357.9,992.6 L3357.8,990.2 L3356.8,989.8 L3355.0,991.4 L3352.6,989.0 L3354.2,987.2 L3353.8,986.2 L3351.4,986.1 L3351.4,982.7 L3353.8,982.6 L3354.2,981.6 L3352.6,979.8 L3355.0,977.4 L3356.8,979.0 L3357.8,978.6 L3357.9,976.2 L3361.3,976.2 L3361.4,978.6 L3362.4,979.0 L3364.2,977.4 L3366.6,979.8 L3365.0,981.6 L3365.4,982.6 Z" fill="none" stroke="#2d2d2d" stroke-width="1.6" stroke-linejoin="round"/><circle cx="3359.6" cy="984.4" r="2" fill="#2d2d2d"/></svg>
<svg style="left:1195.1px;top:1023.2px" width="26.1" height="25.8" viewBox="0 0 26.1 25.8" preserveAspectRatio="none"><path d="M3.6,7.3 H12.6 L7.9,14.4 H0 Z" fill="#256b59"/><path d="M19.9,16.2 L19.6,21.2 L11.2,25.7 L10.9,18.6 Z" fill="#256b59"/><path d="M6.2,16.6 L9.6,20 L12.4,18.2 L8,13.8 Z" fill="#256b59"/><path d="M24.9,1.2 C17,0.6 10,6.4 7.6,15.8 L10.4,18.6 C19.4,16 25.6,9 24.9,1.2 Z" fill="#fff" stroke="#256b59" stroke-width="2.1" stroke-linejoin="round"/><circle cx="18.7" cy="7.4" r="1.8" fill="#256b59"/></svg>
<svg style="left:1195.1px;top:1073.2px" width="26.1" height="25.8" viewBox="0 0 26.1 25.8" preserveAspectRatio="none"><path d="M3.6,7.3 H12.6 L7.9,14.4 H0 Z" fill="#256b59"/><path d="M19.9,16.2 L19.6,21.2 L11.2,25.7 L10.9,18.6 Z" fill="#256b59"/><path d="M6.2,16.6 L9.6,20 L12.4,18.2 L8,13.8 Z" fill="#256b59"/><path d="M24.9,1.2 C17,0.6 10,6.4 7.6,15.8 L10.4,18.6 C19.4,16 25.6,9 24.9,1.2 Z" fill="#fff" stroke="#256b59" stroke-width="2.1" stroke-linejoin="round"/><circle cx="18.7" cy="7.4" r="1.8" fill="#256b59"/></svg>
<svg style="left:1293.2px;top:1030.2px" width="16.9" height="16.3" viewBox="0 0 17 16.5" preserveAspectRatio="none"><path d="M1,1 L16,15.5 M16,1 L1,15.5" fill="none" stroke="#4a4a4a" stroke-width="2.3"/></svg>
<svg style="left:1293.2px;top:1076.6px" width="16.9" height="16.3" viewBox="0 0 17 16.5" preserveAspectRatio="none"><path d="M1,1 L16,15.5 M16,1 L1,15.5" fill="none" stroke="#256b59" stroke-width="2.3"/></svg>
<svg style="left:1326px;top:1023.2px" width="32" height="32" viewBox="1326 1023.2 32 32"><rect x="1331.7" y="1028.5" width="20" height="19.8" fill="#fff" stroke="#2f2f2f" stroke-width="2.6"/></svg>
<svg style="left:1326px;top:1070.2px" width="32" height="32" viewBox="1326 1070.2 32 32"><rect x="1331.7" y="1075.5" width="20" height="19.8" fill="#fff" stroke="#2f2f2f" stroke-width="2.6"/></svg>
<svg style="left:1426.7px;top:1027.4px" width="16.9" height="21.8" viewBox="0 0 16.9 21.8" preserveAspectRatio="none"><path d="M2.4,8.6 L8.45,1.8 L14.5,8.6 Z" fill="none" stroke="#555" stroke-width="2.3" stroke-linejoin="round"/><path d="M2.4,13.2 L8.45,20 L14.5,13.2 Z" fill="none" stroke="#555" stroke-width="2.3" stroke-linejoin="round"/></svg>
<svg style="left:1563.4px;top:1027.4px" width="16.9" height="21.8" viewBox="0 0 16.9 21.8" preserveAspectRatio="none"><path d="M2.4,8.6 L8.45,1.8 L14.5,8.6 Z" fill="none" stroke="#555" stroke-width="2.3" stroke-linejoin="round"/><path d="M2.4,13.2 L8.45,20 L14.5,13.2 Z" fill="none" stroke="#555" stroke-width="2.3" stroke-linejoin="round"/></svg>
<svg style="left:3234.8px;top:1027.4px" width="16.9" height="21.8" viewBox="0 0 16.9 21.8" preserveAspectRatio="none"><path d="M2.4,8.6 L8.45,1.8 L14.5,8.6 Z" fill="none" stroke="#555" stroke-width="2.3" stroke-linejoin="round"/><path d="M2.4,13.2 L8.45,20 L14.5,13.2 Z" fill="none" stroke="#555" stroke-width="2.3" stroke-linejoin="round"/></svg>
<svg style="left:3327.5px;top:1027.2px" width="16.5" height="9.3" viewBox="0 0 16.5 9.3" preserveAspectRatio="none"><path d="M2.2,8 L8.25,1.6 L14.3,8 Z" fill="none" stroke="#256b59" stroke-width="2.5" stroke-linejoin="round"/></svg>
<svg style="left:3454px;top:1016px" width="40" height="36" viewBox="3454 1016 40 36"><defs><pattern id="hat" width="3" height="3" patternUnits="userSpaceOnUse" patternTransform="rotate(-35)"><rect width="3" height="3" fill="#c9c9c9"/><rect width="3" height="1.2" fill="#9a9a9a"/></pattern></defs><path d="M3471.5,1020.2 H3486.9 V1044 H3471.5 Z" fill="url(#hat)"/><rect x="3457.9" y="1020.2" width="29" height="23.8" rx="2.4" fill="none" stroke="#444" stroke-width="1.2"/><path d="M3457.9,1028 H3471.5 M3457.9,1036 H3471.5 M3471.5,1020.2 V1044" fill="none" stroke="#444" stroke-width="1.2"/><circle cx="3483.9" cy="1041.8" r="6.2" fill="#2f2f2f"/><path d="M3483.9,1037.8 V1045.8 M3479.9,1041.8 H3487.9" fill="none" stroke="#fff" stroke-width="1.7"/></svg>
<svg style="left:1144px;top:1071.3px" width="26" height="25.8" viewBox="0 0 26 25.8" preserveAspectRatio="none"><g transform="translate(0,25.8) rotate(-44.75)"><path d="M0,0 L9,-4.5 L32.1,-4.5 L32.1,4.5 L9,4.5 Z" fill="#256b59"/><path d="M3.8,0 L8.3,-2.4 L8.3,2.4 Z" fill="#f8f8f8"/><rect x="9.8" y="-3.1" width="16.6" height="6.2" fill="#f8f8f8"/><path d="M13.2,0 H23.2" fill="none" stroke="#256b59" stroke-width="3.8" stroke-linecap="round"/><path d="M13.2,0 H23.2" fill="none" stroke="#f8f8f8" stroke-width="1.3" stroke-linecap="round"/></g></svg>
<svg style="left:1247.8px;top:1071px" width="26.1" height="26.1" viewBox="0 0 26.1 26.1" preserveAspectRatio="none"><circle cx="13.05" cy="13.05" r="11.8" fill="none" stroke="#256b59" stroke-width="2.4"/><rect x="11.8" y="7.2" width="2.6" height="2.6" fill="#256b59"/><path d="M10.2,11.8 H14.8 V17.6 H16.6 V19.7 H9.8 V17.6 H12.3 V14 H10.2 Z" fill="#256b59"/></svg>
<svg style="left:1370.1px;top:1069.3px" width="28.2" height="26.7" viewBox="0 0 28 26" preserveAspectRatio="none"><path d="M1.4,16.6 L5.8,1.8 L11.2,19.2 L16,8.4 L20.8,24.2 L25.4,15.6 L26.8,19.6" fill="none" stroke="#8c2a87" stroke-width="3.2" stroke-linejoin="round" stroke-linecap="round"/></svg>
</div>
</body></html>
